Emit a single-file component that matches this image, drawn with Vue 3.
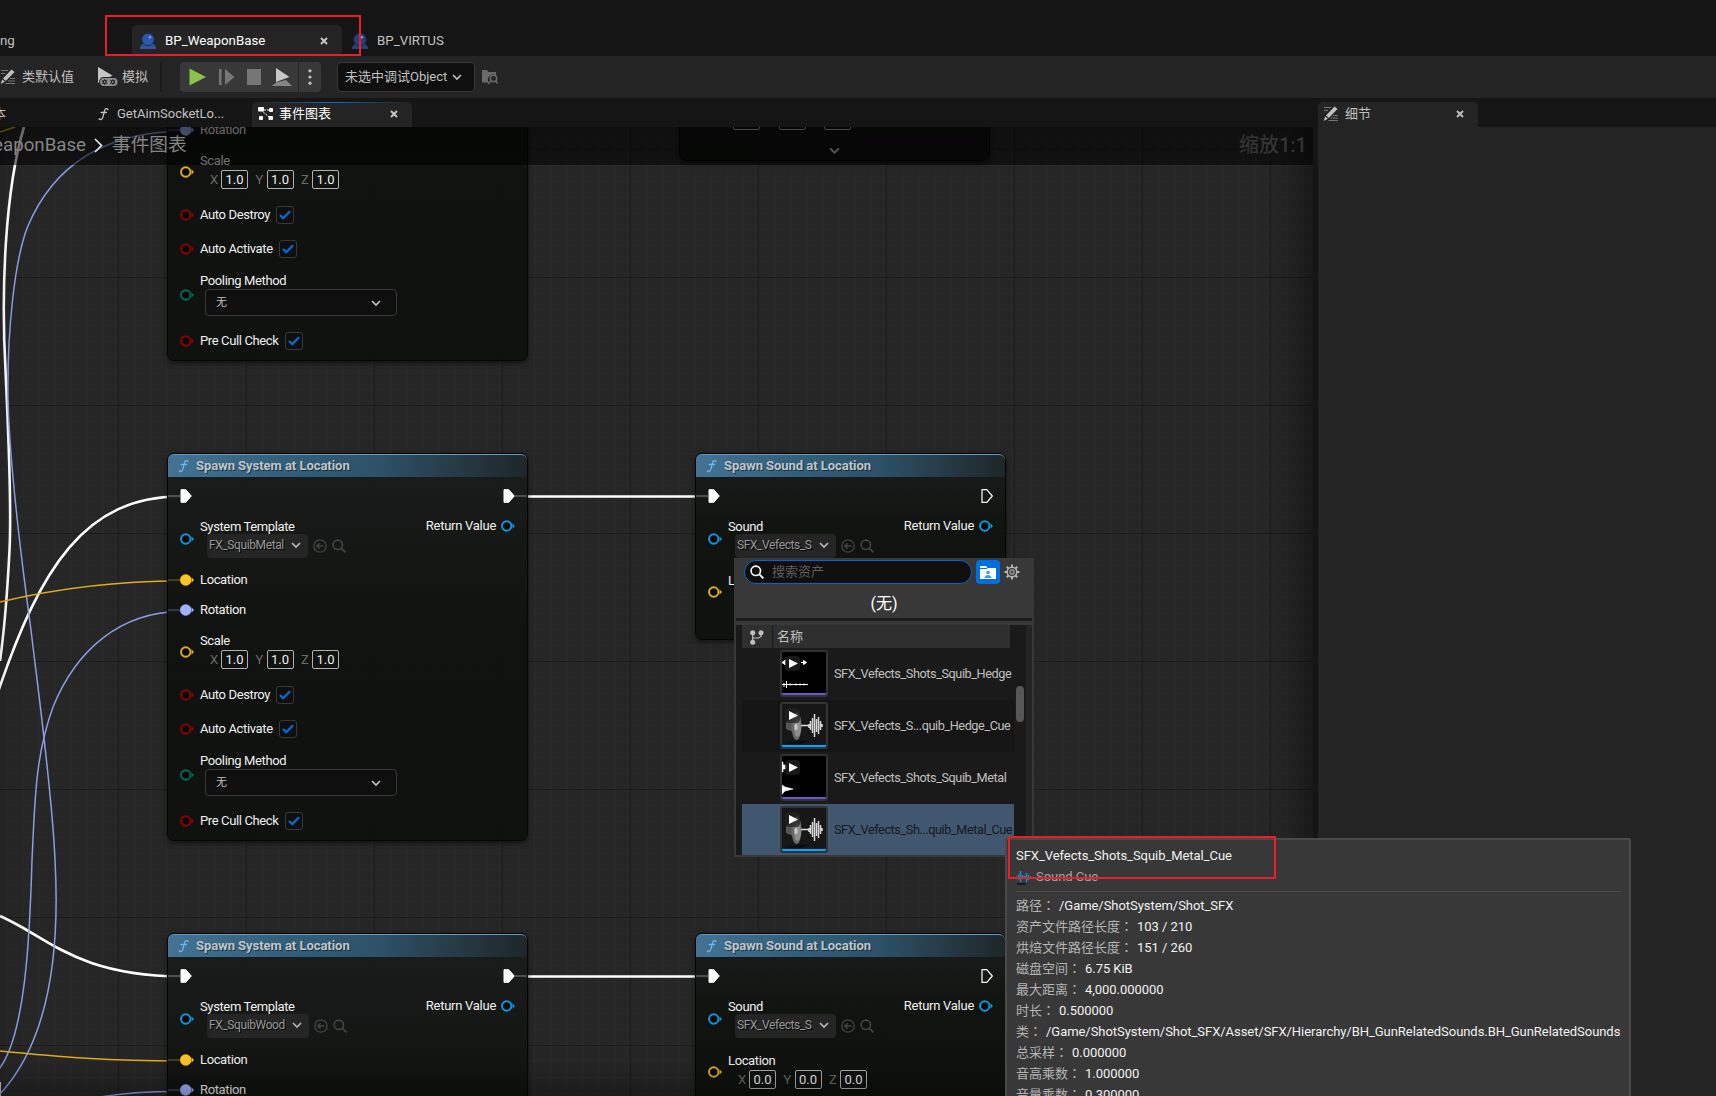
<template>
  <div class="editor">
    <svg class="sprite" width="0" height="0">
      <symbol id="chevron" viewBox="0 0 10 6"><path d="M1 1l4 4 4-4" fill="none" stroke="currentColor" stroke-width="1.7" /></symbol>
      <symbol id="close" viewBox="0 0 8 8"><path d="M1 1l6 6M7 1l-6 6" fill="none" stroke="currentColor" stroke-width="1.9" /></symbol>
      <symbol id="func" viewBox="0 0 12 14">
        <path d="M10.800 2.200C10 .6 8 .7 7.400 2.800L5 11.200C4.500 13 2.700 13.600 1.200 12.300M3.400 5.400h5.800" fill="none" stroke="currentColor" stroke-width="1.5" stroke-linecap="round" />
      </symbol>
      <symbol id="orb" viewBox="0 0 16 16">
        <path d="M0 16v-2l2.500-3h11L16 14v2z" fill="currentColor" />
        <circle cx="8" cy="6.500" r="6.300" fill="currentColor" stroke="#1a2747" stroke-width=".9" />
        <circle cx="10" cy="4.200" r="1.200" fill="#6fa0ff" />
      </symbol>
      <symbol id="pencil" viewBox="0 0 16 16">
        <path d="M1 1.500h7M1 4.500h4M10 9.500h5M8 12h7M5.500 14.500H15" stroke="#777" stroke-width="1.200" />
        <path d="M11.500.5l3 2.600-8.700 9L3 9.500zM2.300 10.400l2.600 2.400L.5 15z" fill="currentColor" />
      </symbol>
      <symbol id="magnify" viewBox="0 0 14 14">
        <circle cx="5.800" cy="5.800" r="4.700" fill="none" stroke="currentColor" stroke-width="1.600" />
        <path d="M9.200 9.200l4.200 4.200" stroke="currentColor" stroke-width="1.800" />
      </symbol>
      <symbol id="useArrow" viewBox="0 0 14 14">
        <circle cx="7" cy="7" r="6.200" fill="none" stroke="currentColor" stroke-width="1.300" />
        <path d="M10.500 7H4M6.600 4.200L3.800 7l2.800 2.800" fill="none" stroke="currentColor" stroke-width="1.500" />
      </symbol>
      <symbol id="graph" viewBox="0 0 15 14">
        <path d="M3 3h9M3 3l9 8" stroke="currentColor" stroke-width="1" stroke-dasharray="2 1" />
        <rect x="0" y="0" width="6" height="4.500" rx="1" fill="currentColor" />
        <rect x="11" y="1" width="4" height="4" rx="1" fill="currentColor" />
        <rect x="10.500" y="9" width="4.500" height="4" rx="1" fill="currentColor" />
        <rect x="1" y="9" width="4" height="4" rx="1" fill="currentColor" />
      </symbol>
      <symbol id="pinFull" viewBox="0 0 14 12"><circle cx="5.700" cy="6" r="5.700" fill="currentColor" /><path d="M11.500 3.200L14 6l-2.500 2.800z" fill="currentColor" /></symbol>
      <symbol id="pinEmpty" viewBox="0 0 14 12"><circle cx="5.700" cy="6" r="4.700" fill="#060907" stroke="currentColor" stroke-width="1.900" /><path d="M11.500 3.200L14 6l-2.500 2.800z" fill="currentColor" /></symbol>
      <symbol id="execFull" viewBox="0 0 12 14"><path d="M1 .7h4.800L11.300 7l-5.500 6.300H1z" fill="#fff" stroke="#fff" stroke-linejoin="round" /></symbol>
      <symbol id="execEmpty" viewBox="0 0 12 14"><path d="M1 .7h4.800L11.300 7l-5.500 6.300H1z" fill="none" stroke="#fff" stroke-width="1.200" stroke-linejoin="round" /></symbol>
    </svg>

    <header class="asset-tabs">
      <span class="asset-prev">ng</span>
      <div class="asset-tab active">
        <svg class="i16 blue"><use href="#orb" /></svg>
        <span>BP_WeaponBase</span>
        <svg class="close"><use href="#close" /></svg>
      </div>
      <div class="asset-tab">
        <svg class="i16 navy"><use href="#orb" /></svg>
        <span>BP_VIRTUS</span>
      </div>
    </header>

    <div class="toolbar">
      <div class="tool defaults"><svg class="i16"><use href="#pencil" /></svg><span>类默认值</span></div>
      <div class="tool simulate">
        <svg width="20" height="20" viewBox="0 0 20 20">
          <path d="M0 0l14.500 8.500L0 16z" fill="#c6c6c6" />
          <rect x="1" y="10" width="19" height="9.500" rx="4.700" fill="#242424" />
          <rect x="2" y="11" width="17.500" height="8" rx="4" fill="#8f8f8f" />
          <g fill="#242424" stroke="#242424"><circle cx="6.600" cy="15" r="1.700" /><circle cx="14.800" cy="15" r="1.700" /><path d="M3.800 13.200l5.600 3.600M9.400 13.200l-5.600 3.600M6.600 12v6M12 13.200l5.600 3.600M17.600 13.200L12 16.800M14.800 12v6" stroke-width=".8" /></g>
          <g fill="#c0c0c0"><circle cx="6.600" cy="15" r=".8" /><circle cx="14.800" cy="15" r=".8" /></g>
        </svg>
        <span>模拟</span>
      </div>
      <i class="tool-sep"></i>
      <div class="play-group">
        <svg width="118" height="30" viewBox="0 0 118 30">
          <path d="M9.500 6.500L26 15 9.500 23.500z" fill="#8bc34a" />
          <path d="M39 7h2.500v16H39zM45 7l9.500 8L45 23z" fill="#767676" />
          <path d="M67 7h14v16H67z" fill="#767676" />
          <path d="M96 6l13.500 9L96 20z" fill="#c8c8c8" />
          <path d="M92 24l4-3.500 10-2.500 6 6z" fill="#858585" />
        </svg>
        <svg class="dots" width="22" height="30" viewBox="0 0 22 30"><g fill="#c0c0c0"><circle cx="11.500" cy="8.500" r="1.700" /><circle cx="11.500" cy="15" r="1.700" /><circle cx="11.500" cy="21.500" r="1.700" /></g></svg>
      </div>
      <div class="debug-select"><span>未选中调试Object</span><svg class="chev"><use href="#chevron" /></svg></div>
      <svg width="17" height="16" viewBox="0 0 17 16">
        <path d="M0 1h5l1.500 2H14v3.500a5 5 0 0 0-7 7H0z" fill="#6a6a6a" />
        <circle cx="11.500" cy="9.500" r="3.200" fill="none" stroke="#6a6a6a" stroke-width="1.500" /><path d="M9 12l-3 3M14 12l1.500 2.500" stroke="#6a6a6a" stroke-width="1.500" />
      </svg>
    </div>

    <div class="workspace">
      <section class="main-pane">
        <nav class="doc-tabs">
          <span class="doc-prev">脚本</span>
          <div class="doc-tab">
            <svg class="fn"><use href="#func" /></svg><span>GetAimSocketLo...</span>
          </div>
          <div class="doc-tab active">
            <svg class="graph-icon"><use href="#graph" /></svg><span>事件图表</span>
            <svg class="close"><use href="#close" /></svg>
          </div>
        </nav>

        <div class="graph">
          <svg class="wires" width="1313" height="969" viewBox="0 127 1313 969">
            <path v-for="(w, i) in wires" :key="i" :d="w.d" :stroke="w.color" :stroke-width="w.width" />
          </svg>

          <article
            v-for="(n, i) in nodes"
            :key="i"
            class="node"
            :style="{ left: n.x + 'px', top: n.y - 127 + 'px', width: n.w + 'px', height: n.h + 'px' }"
          >
            <header class="node-head"><svg class="fn"><use href="#func" /></svg><span>{{ n.title }}</span></header>
            <div class="row exec">
              <i class="lead"></i>
              <svg class="exec-pin"><use href="#execFull" /></svg>
              <svg class="exec-pin out"><use :href="n.sound ? '#execEmpty' : '#execFull'" /></svg>
              <i v-if="!n.sound" class="lead tail"></i>
            </div>
            <div v-for="r in n.rows" :key="r.label" class="row" :class="r.kind">
              <svg class="pin" :style="{ color: r.color }"><use :href="r.full ? '#pinFull' : '#pinEmpty'" /></svg>
              <i v-if="r.full" class="lead" :style="{ background: r.color }"></i>
              <div class="field">
                <span class="label">{{ r.label }}</span>
                <span v-if="r.kind === 'check'" class="checkbox">
                  <svg width="12" height="10" viewBox="0 0 12 10"><path d="M1 5l3.200 3.200L11 1.200" fill="none" stroke="#0070e0" stroke-width="2.200" /></svg>
                </span>
                <div v-if="r.kind === 'asset'" class="asset">
                  <span class="asset-select">{{ r.value }}<svg class="chev"><use href="#chevron" /></svg></span>
                  <svg class="i14"><use href="#useArrow" /></svg>
                  <svg class="i14"><use href="#magnify" /></svg>
                </div>
                <div v-if="r.kind === 'vector'" class="vector">
                  <template v-for="axis in ['X', 'Y', 'Z']" :key="axis"><span class="axis">{{ axis }}</span><span class="num">{{ r.value }}</span></template>
                </div>
                <div v-if="r.kind === 'enum'" class="enum"><span>{{ r.value }}</span><svg class="chev"><use href="#chevron" /></svg></div>
              </div>
              <div v-if="r.kind === 'asset'" class="return">
                <span>Return Value</span><svg class="pin"><use href="#pinEmpty" /></svg>
              </div>
            </div>
            <svg v-if="n.sound" class="expand"><use href="#chevron" /></svg>
          </article>

          <div class="shade"></div>
          <div class="breadcrumb">
            <span class="crumb-root">BP_WeaponBase</span>
            <svg width="9" height="15" viewBox="0 0 9 15"><path d="M1 1l6.500 6.500L1 14" fill="none" stroke="#e6e6e6" stroke-width="1.700" /></svg>
            <span class="crumb">事件图表</span>
            <span class="zoom">缩放1:1</span>
          </div>
        </div>
      </section>

      <aside class="details">
        <div class="details-tabs">
          <div class="details-tab">
            <svg class="i16"><use href="#pencil" /></svg><span>细节</span>
            <svg class="close"><use href="#close" /></svg>
          </div>
        </div>
        <div class="details-body"></div>
      </aside>
    </div>

    <div class="picker">
      <div class="picker-top">
        <div class="search"><svg class="i14"><use href="#magnify" /></svg><span>搜索资产</span></div>
        <div class="folder">
          <svg width="16" height="13" viewBox="0 0 16 13"><path d="M0 0h6l1.500 2H16v11H0z" fill="#fff" /><path d="M0 2.500h7" stroke="#0070e0" /><circle cx="8" cy="6.500" r="1.800" fill="#4b96e6" /><path d="M4.500 12c0-4 7-4 7 0z" fill="#4b96e6" /></svg>
        </div>
        <svg class="gear" width="16" height="16" viewBox="0 0 16 16">
          <g fill="none" stroke="#b4b4b4"><circle cx="8" cy="8" r="4.800" stroke-width="1.500" /><circle cx="8" cy="8" r="2" stroke-width="1.800" stroke="#8a8a8a" /><path d="M8 .5v3M8 12.500v3M.5 8h3M12.500 8h3M2.700 2.700l2.100 2.100M11.200 11.200l2.100 2.100M2.700 13.300l2.100-2.100M11.200 4.800l2.100-2.100" stroke-width="2" /></g>
        </svg>
      </div>
      <div class="none">(无)</div>
      <div class="picker-list">
        <div class="list-main">
          <div class="list-head">
            <span class="branch">
              <svg width="14" height="15" viewBox="0 0 14 15"><g fill="#c0c0c0"><circle cx="2.700" cy="2.700" r="2.500" /><circle cx="11" cy="2.700" r="2.500" /><circle cx="2.700" cy="12.300" r="2.500" /></g><path d="M2.700 3v9M11 3v3.500L8.500 8H3" fill="none" stroke="#c0c0c0" stroke-width="1.200" /></svg>
            </span>
            <span class="name-col">名称</span>
          </div>
          <div v-for="a in assets" :key="a.name" class="asset-row" :class="{ selected: a.selected }">
            <div class="thumb" :class="a.type">
              <svg width="44" height="43" viewBox="0 0 44 43">
                <template v-if="a.type === 'cue'">
                  <path d="M4 18l7-3v13l-7-3z" fill="#555" />
                  <ellipse cx="14.500" cy="22" rx="5" ry="14" fill="#6a6a6a" /><ellipse cx="15.500" cy="24" rx="3.500" ry="9" fill="#8e8e8e" /><ellipse cx="14" cy="23" rx="1.500" ry="3" fill="#ccc" />
                  <path d="M2 39l24-2.500-9 4z" fill="#090909" />
                  <path d="M19 21.500h8M27 20v4M28.500 17v9M30.500 14v15M32.500 10v23M34.500 15v13M36.500 13v17M38.500 17v9M40 20v3" stroke="#d9d9d9" stroke-width="1.500" />
                </template>
                <template v-else-if="a.long">
                  <path d="M0 10.500l3.500-2.500v5zM19 10.500h5M21.500 8.500l3 2-3 2zM0 32.500h26M2 31v4M4.500 29v7M8 31.500v2M14 31.500v2M18 31.500v2M22 31.500v2" fill="#fff" stroke="#fff" />
                </template>
                <template v-else><path d="M0 6h1v10H0zM1 9h3v4H1zM0 29l3 2 8 2-8 2-3 3z" fill="#fff" stroke="#fff" stroke-width=".6" /></template>
                <rect x="3" y="4" width="15" height="15" rx="4" fill="#222" fill-opacity=".75" />
                <path d="M7 7l9 4.500L7 16z" fill="#fff" />
              </svg>
            </div>
            <span class="asset-name">{{ a.name }}</span>
          </div>
        </div>
        <div class="scroll"><i></i></div>
      </div>
    </div>

    <div class="tooltip">
      <div class="tip-title">SFX_Vefects_Shots_Squib_Metal_Cue</div>
      <div class="tip-type">
        <svg width="16" height="15" viewBox="0 0 16 15"><path d="M.5 6.500v2M2.500 4.500v5M4.500 1v11M6.500 5v4M8.500 6v2M10.500 3v9M12.500 5v5M14.500 6.500v2" stroke="#1192d8" stroke-width="1.500" /><path d="M1 14h9" stroke="#111" stroke-width="1.500" /></svg>
        <span>Sound Cue</span>
      </div>
      <dl>
        <div v-for="t in tips" :key="t[0]"><dt>{{ t[0] }}<i lang="zh-Hant">：</i></dt><dd>{{ t[1] }}</dd></div>
      </dl>
    </div>

    <div class="mark mark-tab"></div>
    <div class="mark mark-tip"></div>
  </div>
</template>

<script setup>
const white = '#ffffff'
const yellow = '#e0ad1e'
const blue = '#8c9de4'

const wires = [
  { d: 'M24 127 C5 190 1 290 5.500 370 C8 430 12 500 9.500 550 C7 600 4 632 0 661', color: white, width: 2.6 },
  { d: 'M-2 692 C40 568 85 496 181 496.500', color: white, width: 2.6 },
  { d: 'M0 916 C50 938 75 975 181 976.500', color: white, width: 2.6 },
  { d: 'M528 496.500H712M528 976.500H712', color: white, width: 2.6 },
  { d: 'M0 1082V1096', color: white, width: 1.6 },
  { d: 'M181 131 C90 133 48 178 27.500 227 C14 262 7 335 8 400 C10 470 20 550 31 630 C38 690 52 790 55 860 C60 950 50 1040 0 1094', color: blue, width: 1.5 },
  { d: 'M181 611.500 C120 612 76 650 53 707 C35 757 35 800 32 860 C30 930 26 1035 -1 1069', color: blue, width: 1.5 },
  { d: 'M100 1097 Q135 1091 181 1091.500', color: blue, width: 1.5 },
  { d: 'M0 132 L15 127', color: yellow, width: 1.5 },
  { d: 'M0 602 C50 590 110 581 181 581', color: yellow, width: 1.5 },
  { d: 'M0 1051 C60 1057 110 1061 181 1061', color: yellow, width: 1.5 },
]

const systemRows = (template) => [
  { kind: 'asset', label: 'System Template', value: template, color: '#0e97dc' },
  { kind: 'plain', label: 'Location', color: '#fcc526', full: true },
  { kind: 'plain', label: 'Rotation', color: '#9fb1fb', full: true },
  { kind: 'vector', label: 'Scale', value: '1.0', color: '#e0ad1e' },
  { kind: 'check', label: 'Auto Destroy', color: '#930000' },
  { kind: 'check', label: 'Auto Activate', color: '#930000' },
  { kind: 'enum', label: 'Pooling Method', value: '无', color: '#006b5b' },
  { kind: 'check', label: 'Pre Cull Check', color: '#930000' },
]

const soundRows = [
  { kind: 'asset', label: 'Sound', value: 'SFX_Vefects_S', color: '#0e97dc' },
  { kind: 'vector', label: 'Location', value: '0.0', color: '#e0ad1e' },
]

const system = { w: 361, h: 388, x: 167, title: 'Spawn System at Location' }
const sound = { w: 311, h: 187, x: 695, title: 'Spawn Sound at Location', rows: soundRows, sound: true }

const nodes = [
  { ...system, y: -27, rows: systemRows('FX_SquibMetal') },
  { ...sound, x: 679, y: -26 },
  { ...system, y: 453, rows: systemRows('FX_SquibMetal') },
  { ...sound, y: 453 },
  { ...system, y: 933, rows: systemRows('FX_SquibWood') },
  { ...sound, y: 933 },
]

const assets = [
  { name: 'SFX_Vefects_Shots_Squib_Hedge', type: 'wave', long: true },
  { name: 'SFX_Vefects_S...quib_Hedge_Cue', type: 'cue' },
  { name: 'SFX_Vefects_Shots_Squib_Metal', type: 'wave' },
  { name: 'SFX_Vefects_Sh...quib_Metal_Cue', type: 'cue', selected: true },
]

const tips = [
  ['路径', '/Game/ShotSystem/Shot_SFX'],
  ['资产文件路径长度', '103 / 210'],
  ['烘焙文件路径长度', '151 / 260'],
  ['磁盘空间', '6.75 KiB'],
  ['最大距离', '4,000.000000'],
  ['时长', '0.500000'],
  ['类', '/Game/ShotSystem/Shot_SFX/Asset/SFX/Hierarchy/BH_GunRelatedSounds.BH_GunRelatedSounds'],
  ['总采样', '0.000000'],
  ['音高乘数', '1.000000'],
  ['音量乘数', '0.300000'],
]
</script>

<style>
body {
  background: #151515;
  overflow: hidden;
}
</style>

<style scoped>
.editor {
  position: relative;
  width: 1716px;
  height: 1096px;
  overflow: hidden;
  display: flex;
  flex-direction: column;
  background: #151515;
  color: #c0c0c0;
  font: 13px/14px Roboto, "Noto Sans CJK SC", sans-serif;
  white-space: nowrap;
}

.editor * {
  box-sizing: border-box;
}

svg {
  flex: none;
  display: block;
}

.sprite {
  position: absolute;
}

.i16 {
  width: 16px;
  height: 16px;
}

.i14 {
  width: 14px;
  height: 14px;
}

.blue {
  color: #2e57a8;
}

.navy {
  color: #263f78;
}

.close {
  width: 8px;
  height: 8px;
  margin-left: auto;
}

.chev {
  width: 10px;
  height: 6px;
}

.fn {
  width: 11px;
  height: 14px;
}

/* top bars */
.asset-tabs {
  height: 56px;
  padding-top: 25px;
  display: flex;
  font-size: 13.3px;
}

.asset-prev {
  width: 132px;
  padding-top: 9px;
}

.asset-tab {
  height: 31px;
  display: flex;
  align-items: center;
  padding: 0 14px 0 8px;
}

.asset-tab span {
  margin-left: 9px;
}

.asset-tab.active {
  width: 210px;
  background: #242424;
  color: #fff;
  border-radius: 5px 5px 0 0;
}

.asset-tab.active .close,
.doc-tab.active .close {
  color: #c8c8c8;
}

.asset-tab:last-child {
  padding-left: 10px;
}

.toolbar {
  height: 42px;
  background: #242424;
  display: flex;
  align-items: center;
}

.tool {
  display: flex;
  align-items: center;
  gap: 6px;
}

.tool span,
.debug-select span {
  margin-top: -1px;
}

.defaults {
  width: 98px;
}

.simulate {
  width: 62px;
  gap: 4px;
}

.tool-sep {
  width: 2px;
  height: 30px;
  background: #1a1a1a;
}

.play-group {
  margin-left: 18px;
  display: flex;
  width: 141px;
  height: 30px;
  background: #383838;
  border-radius: 4px;
}

.dots {
  border-left: 1px solid #242424;
}

.debug-select {
  margin: 0 7px 0 16px;
  width: 138px;
  height: 30px;
  padding: 0 12px 0 7px;
  display: flex;
  align-items: center;
  justify-content: space-between;
  background: #0f0f0f;
  border: 1px solid #383838;
  border-radius: 4px;
}

.workspace {
  flex: 1;
  min-height: 0;
  display: flex;
  gap: 5px;
}

.main-pane {
  width: 1313px;
  display: flex;
  flex-direction: column;
}

.doc-tabs {
  height: 29px;
  padding-top: 4px;
  display: flex;
}

.doc-prev {
  width: 6px;
  margin-right: 92px;
  padding-bottom: 2px;
  display: flex;
  justify-content: flex-end;
  align-items: center;
  overflow: hidden;
}

.doc-tab {
  width: 154px;
  height: 25px;
  padding-bottom: 2px;
  display: flex;
  align-items: center;
}

.doc-tab .fn {
  margin-right: 8px;
}

.doc-tab.active {
  width: 160px;
  padding: 0 14px 2px 6px;
  background: linear-gradient(90deg, transparent 5%, #0070e0 50%, transparent 95%) top / 100% 1px no-repeat #242424;
  border-radius: 5px 5px 0 0;
  color: #fff;
}

.graph-icon {
  width: 15px;
  height: 14px;
  margin-right: 6px;
}

/* graph canvas */
.graph {
  position: relative;
  flex: 1;
  overflow: hidden;
  background-color: #262626;
  background-image:
    linear-gradient(90deg, #1b1b1b 1px, transparent 1px),
    linear-gradient(#1b1b1b 1px, transparent 1px),
    linear-gradient(90deg, #2a2a2a 1px, transparent 1px),
    linear-gradient(#2a2a2a 1px, transparent 1px);
  background-size: 128px 128px, 128px 128px, 16px 16px, 16px 16px;
  background-position: 118px 22px, 118px 22px, 118px 22px, 118px 22px;
}

.wires {
  position: absolute;
  left: 0;
  top: 0;
  fill: none;
}

.node {
  position: absolute;
  display: flex;
  flex-direction: column;
  border-radius: 7px;
  border: 1px solid #050505;
  background: linear-gradient(rgba(27, 29, 28, .97), rgba(15, 18, 15, .97) 45%, rgba(14, 17, 14, .97));
  box-shadow: 0 2px 5px rgba(0, 0, 0, .55);
  color: #f0f0f0;
  letter-spacing: -.37px;
}

.node-head {
  flex: none;
  height: 23px;
  padding-left: 10px;
  display: flex;
  align-items: center;
  gap: 7px;
  border-radius: 6px 6px 0 0;
  border-top: 1px solid #5f9fc5;
  background: linear-gradient(95deg, #447393, #34607c 30%, #2d5269 58%, #283f4c 76%, #1e2628);
  color: #bfc6ca;
  font-weight: 700;
  letter-spacing: -.04px;
  text-shadow: 1px 1px 0 rgba(0, 0, 0, .5);
}

.node-head .fn {
  color: #67b9ee;
}

.row {
  position: relative;
  flex: none;
  display: flex;
  align-items: center;
  padding: 0 12px;
}

.row.exec {
  height: 33px;
  margin-top: 2px;
}

.exec-pin {
  width: 12px;
  height: 14px;
}

.exec-pin.out {
  margin-left: auto;
}

/* part of a wire that runs over the node border */
.lead {
  position: absolute;
  left: 0;
  top: 50%;
  width: 12px;
  height: 2px;
  margin-top: -1px;
  background: #fff;
  opacity: .22;
}

.lead.tail {
  left: auto;
  right: 0;
}

.pin {
  width: 14px;
  height: 12px;
  color: #0e97dc;
}

.field {
  margin-left: 6px;
}

.label {
  display: block;
}

.plain {
  height: 30px;
}

.check {
  height: 34px;
}

.check .field {
  display: flex;
  align-items: center;
  gap: 6px;
}

.checkbox {
  width: 18px;
  height: 18px;
  display: flex;
  align-items: center;
  justify-content: center;
  background: #0f0f0f;
  border: 1px solid #383838;
  border-radius: 3px;
}

.row.asset,
.row.vector {
  height: 53px;
}

.row.enum {
  height: 58px;
}

.field .asset {
  display: flex;
  align-items: center;
  gap: 5px;
  margin-left: 7px;
  color: #444;
}

.asset-select {
  display: flex;
  align-items: center;
  gap: 7px;
  height: 24px;
  padding: 0 7px 2px 2px;
  background: #242524;
  border-radius: 4px;
  color: #999;
  font-size: 12px;
  letter-spacing: -.4px;
  text-shadow: 1px 1px 0 #000;
}

.asset-select .chev {
  color: #b5b5b5;
}

.return {
  align-self: flex-start;
  margin-left: auto;
  margin-top: 7px;
  display: flex;
  align-items: center;
  gap: 5px;
  letter-spacing: -.27px;
}

.field .vector {
  display: flex;
  align-items: center;
  margin: 2px 0 0 10px;
  letter-spacing: 0;
}

.axis {
  width: 11px;
  color: #6b6b6b;
}

.num {
  width: 27px;
  height: 19px;
  margin-right: 7.500px;
  text-align: center;
  line-height: 17px;
  border: 1px solid #b0b0b0;
  border-radius: 2px;
}

.field .enum {
  width: 192px;
  height: 27px;
  margin: 1px 0 0 5px;
  padding: 0 15px 0 10px;
  display: flex;
  align-items: center;
  justify-content: space-between;
  background: #0f0f0f;
  border: 1px solid #383838;
  border-radius: 4px;
  font-size: 11px;
  color: #c0c0c0;
}

.expand {
  width: 11px;
  height: 7px;
  margin: 8px auto 0;
  color: #bbb;
}

.shade {
  position: absolute;
  inset: 0;
  box-shadow: inset -14px -10px 34px rgba(0, 0, 0, .4);
}

.breadcrumb {
  position: absolute;
  left: 0;
  right: 0;
  top: 0;
  height: 38px;
  padding: 0 6px 2px 0;
  display: flex;
  align-items: center;
  background: rgba(0, 0, 0, .55);
  font-size: 18.7px;
  line-height: 24px;
  color: #858585;
}

.crumb-root {
  width: 86px;
  display: flex;
  justify-content: flex-end;
  overflow: hidden;
  margin-right: 8px;
}

.crumb {
  margin-left: 9px;
}

.zoom {
  margin-left: auto;
  color: #343434;
  font-size: 20px;
  font-weight: 500;
}

/* details */
.details {
  flex: 1;
  display: flex;
  flex-direction: column;
}

.details-tabs {
  height: 29px;
  padding-top: 4px;
}

.details-tab {
  width: 160px;
  height: 25px;
  padding: 0 14px 2px 5px;
  display: flex;
  align-items: center;
  background: #242424;
  border-radius: 5px 5px 0 0;
}

.details-tab span {
  margin-left: 6px;
}

.details-body {
  flex: 1;
  background: #242424;
}

/* asset picker */
.picker {
  position: absolute;
  left: 734px;
  top: 558px;
  width: 300px;
  height: 299px;
  padding: 2px;
  background: #383838;
}

.picker-top {
  display: flex;
  align-items: center;
  padding-left: 8px;
}

.search {
  width: 228px;
  height: 24px;
  padding: 0 0 1px 5px;
  display: flex;
  align-items: center;
  gap: 8px;
  background: #0f0f0f;
  border: 1.5px solid #0c62c6;
  border-radius: 12px;
  color: #5c5c5c;
}

.search svg {
  color: #fff;
}

.folder {
  width: 24px;
  height: 24px;
  margin: 0 4px;
  display: flex;
  align-items: center;
  justify-content: center;
  background: #0070e0;
  border-radius: 4px;
}

.none {
  height: 34px;
  padding-top: 8px;
  text-align: center;
  font-size: 16px;
  line-height: 24px;
  color: #fff;
}

.picker-list {
  display: flex;
  height: 237px;
  border-top: 3px solid #1a1a1a;
}

.list-main {
  width: 278px;
  margin-top: 4px;
  padding-left: 6px;
  height: 230px;
  overflow: hidden;
  background: linear-gradient(#1a1a1a, #1a1a1a);
}

.list-head {
  width: 268px;
  height: 23px;
  display: flex;
  align-items: center;
  background: #2f2f2f;
}

.branch {
  width: 31px;
  height: 23px;
  padding: 5px 0 0 8px;
  border-right: 1px solid #1a1a1a;
}

.name-col {
  margin-left: 4px;
}

.asset-row {
  height: 52px;
  display: flex;
  align-items: center;
  padding: 0 0 1px 38px;
  background: #1a1a1a;
}

.asset-row:nth-child(odd) {
  background: #151515;
}

.asset-row.selected {
  background: #41576f;
  color: #14181d;
}

.thumb {
  width: 48px;
  height: 47px;
  margin-right: 6px;
  border-radius: 3px;
  border: 2px solid #333;
  background: #000;
  box-shadow: inset 0 -2px #6a55d6;
}

.thumb.cue {
  background: #171717;
  box-shadow: inset 0 -2px #00a8ff;
}

.asset-name {
  font-size: 12.7px;
  letter-spacing: -.42px;
}

.scroll {
  width: 18px;
  margin-top: 4px;
  padding: 61px 0 0 2px;
  height: 230px;
  background: linear-gradient(90deg, #1a1a1a 12px, #242424 12px);
}

.scroll i {
  display: block;
  width: 8px;
  height: 36px;
  border-radius: 4px;
  background: #575757;
}

/* tooltip */
.tooltip {
  position: absolute;
  left: 1005px;
  top: 838px;
  width: 626px;
  height: 280px;
  padding: 9px 8px 0 9px;
  background: #383838;
  border: 2px solid #4a4a4a;
  border-radius: 2px;
  color: #f2f2f2;
  letter-spacing: -.05px;
}

.tip-type {
  display: flex;
  gap: 4px;
  align-items: center;
  height: 28px;
  color: #a6a6a6;
}

dl {
  margin: 0;
  padding-top: 3px;
  border-top: 1px solid #4d4d4d;
}

dl div {
  display: flex;
  align-items: center;
  height: 21px;
}

dt {
  color: #b5b5b5;
  letter-spacing: 0;
}

dt i {
  font-family: "Noto Sans CJK TC", sans-serif;
  font-style: normal;
}

dd {
  margin: 0 0 0 4px;
}

.mark {
  position: absolute;
  border: 2px solid #ee1c25;
}

.mark-tab {
  left: 105px;
  top: 15px;
  width: 256px;
  height: 41px;
}

.mark-tip {
  left: 1008px;
  top: 836px;
  width: 268px;
  height: 43px;
}
</style>
